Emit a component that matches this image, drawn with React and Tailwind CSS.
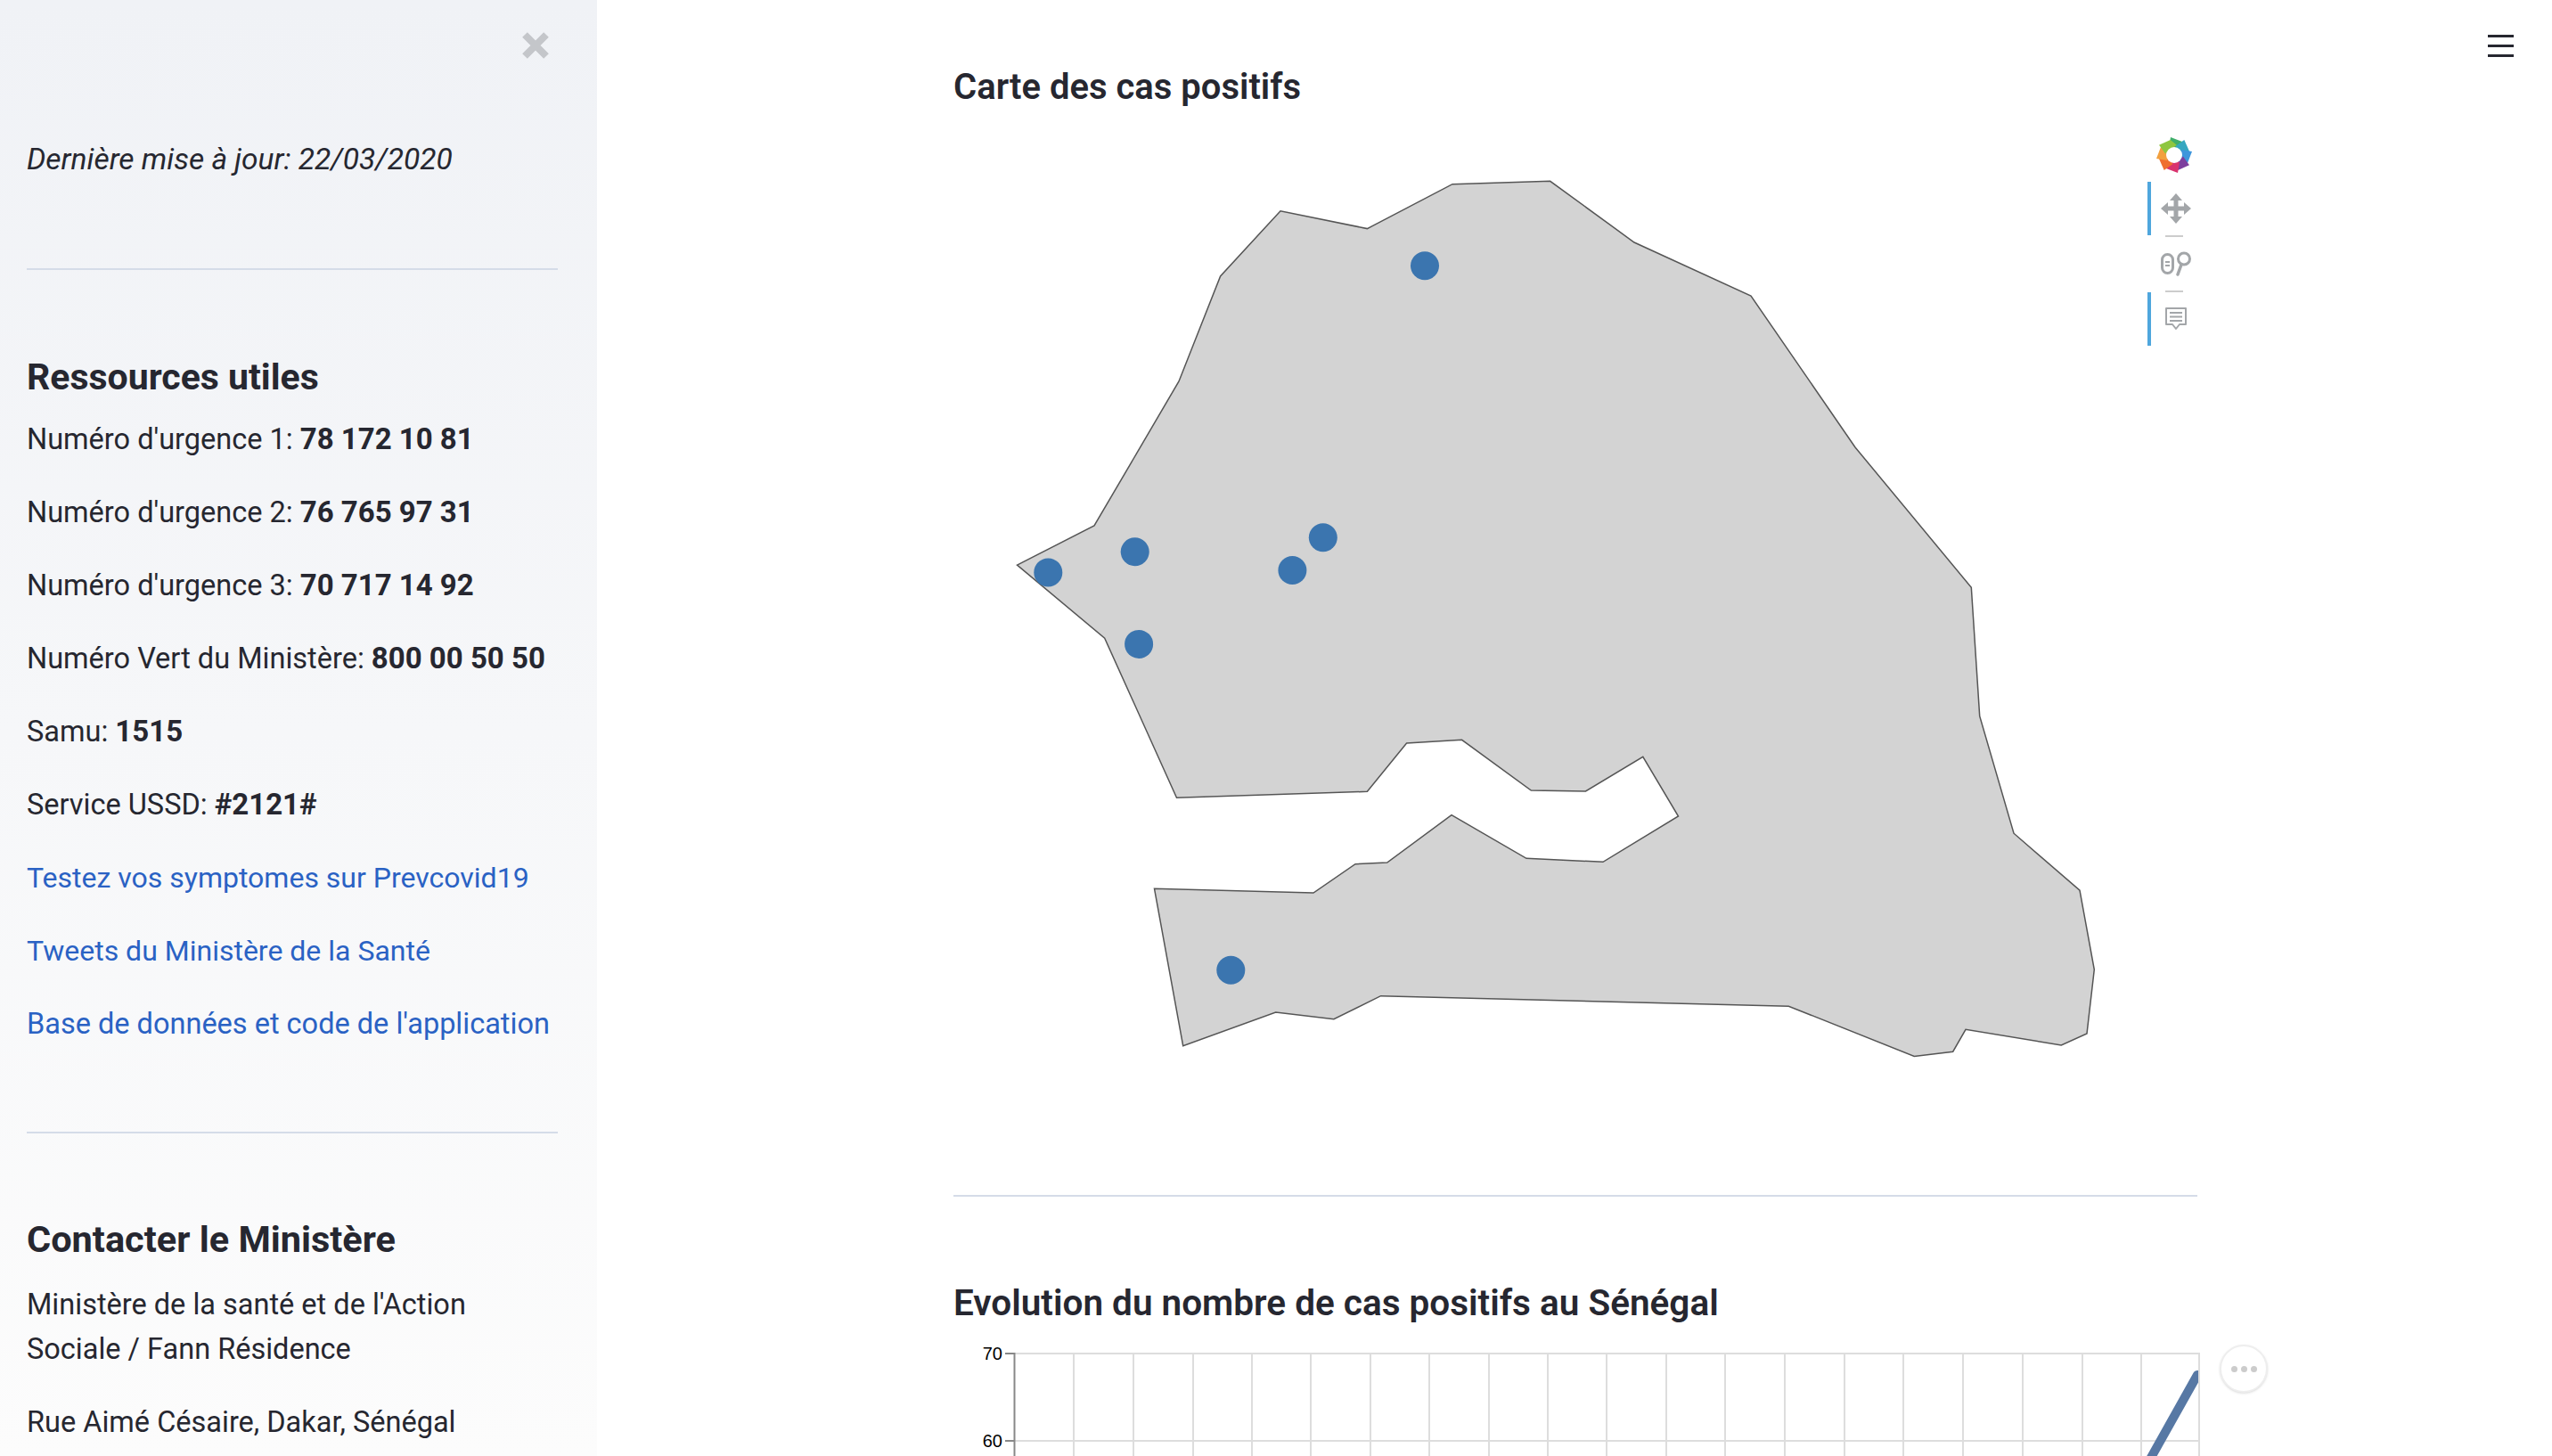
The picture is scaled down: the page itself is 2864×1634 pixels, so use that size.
import React from 'react';

const textFont = { fontFamily: 'Roboto, sans-serif' };

const mapOutline = [
  [1141.5, 634.2], [1228, 590], [1323, 428], [1369.6, 310], [1437, 236.7], [1534.4, 256.6],
  [1630, 206.7], [1739.7, 203.3], [1834, 272], [1965, 332], [2082, 502], [2212.3, 659.3],
  [2221.7, 803.6], [2260, 935.2], [2334, 999.2], [2350.3, 1088.1], [2342, 1160], [2313.3, 1173],
  [2206, 1155.3], [2191.7, 1180.2], [2148.3, 1185.4], [2007.3, 1129.2], [1549.6, 1117.7],
  [1496.9, 1143.7], [1431.7, 1136], [1327.7, 1173.7], [1295.5, 997.3], [1474, 1002],
  [1521, 969.7], [1556.7, 968], [1629, 914.7], [1713, 963.3], [1799, 967.3], [1883.5, 916],
  [1843.8, 849.3], [1779.5, 888], [1718.3, 887], [1640.6, 830.3], [1578.6, 834], [1534.4, 888.3],
  [1320.5, 895.3], [1239.7, 716.1],
];

const mapDots = [
  [1599, 298.3], [1273.7, 619.2], [1176.3, 642.4], [1484.8, 603.2],
  [1450.4, 640], [1278.1, 722.9], [1381.3, 1088.7],
];

const gridX = [1205, 1272, 1339, 1405, 1471, 1538, 1604, 1671, 1737, 1803, 1870, 1936, 2003, 2070, 2136, 2203, 2270, 2337, 2403, 2468];

const petals = ['#3fae6a', '#35a7c0', '#3f96dc', '#7d3f9e', '#d9336e', '#ef6f31', '#f2a03e', '#8fc640'];

const BokehLogo = () => (
  <svg width="42" height="42" viewBox="-21 -21 42 42">
    {petals.map((color, i) => (
      <path key={color} d="M-4 -20 L9 -15 L10 -6 L-6 -8 Z" fill={color} transform={`rotate(${i * 45})`} />
    ))}
    <circle r="9" fill="#fff" />
  </svg>
);

const PanIcon = () => (
  <svg width="34" height="34" viewBox="0 0 34 34" fill="#a3a6a9">
    <path d="M17 0l7 8h-4.5v6.5h6.5V10l8 7-8 7v-4.5h-6.5V26H24l-7 8-7-8h4.5v-6.5H8V24l-8-7 8-7v4.5h6.5V8H10z" />
  </svg>
);

const WheelZoomIcon = () => (
  <svg width="34" height="28" viewBox="0 0 34 28" fill="none" stroke="#a3a6a9" strokeWidth="3">
    <rect x="1.5" y="3.5" width="12" height="21" rx="6" />
    <path d="M5 12h5M5 16h5" strokeWidth="2" />
    <circle cx="26" cy="8.5" r="6.5" />
    <path d="M23 15l-4 11" strokeWidth="3.5" strokeLinecap="round" />
  </svg>
);

const HoverIcon = () => (
  <svg width="26" height="28" viewBox="0 0 26 28" fill="none" stroke="#a3a6a9" strokeWidth="2">
    <path d="M2 2h22v18h-7l-4 5-4-5H2z" strokeLinejoin="round" />
    <path d="M6 7h14M6 11.5h14M6 16h14" />
  </svg>
);

const Toolbar = () => (
  <div className="absolute left-[1740px] top-[153px] flex w-[60px] flex-col items-center">
    <div className="flex h-[51px] items-start"><BokehLogo /></div>
    <div className="flex h-[60px] w-full items-center justify-center border-l-4 border-[#4fa6dd]"><PanIcon /></div>
    <div className="h-[2px] w-[20px] bg-[#cccccc]" />
    <div className="flex h-[60px] w-full items-center justify-center border-l-4 border-transparent"><WheelZoomIcon /></div>
    <div className="h-[2px] w-[20px] bg-[#cccccc]" />
    <div className="flex h-[60px] w-full items-center justify-center border-l-4 border-[#4fa6dd]"><HoverIcon /></div>
  </div>
);

const Phone = ({ label, value }) => (
  <p className="mb-[32px]">
    {label} <strong className="text-[33px] font-bold">{value}</strong>
  </p>
);

const Sidebar = () => (
  <aside className="relative h-[1634px] w-[670px] shrink-0 overflow-hidden bg-gradient-to-b from-[#f0f2f6] to-[#fcfcfc] pl-[30px] pr-[44px] pt-[154px] text-[32.5px] leading-[50px] text-[#262730]" style={textFont}>
    <button className="absolute left-[586px] top-[36px]" aria-label="Fermer">
      <svg width="30" height="30" viewBox="0 0 30 30" stroke="#c4c6ca" strokeWidth="8">
        <path d="M3 3l24 24M27 3L3 27" />
      </svg>
    </button>
    <p className="text-[33.5px] italic">Dernière mise à jour: 22/03/2020</p>
    <hr className="mt-[97px] mb-[90px] border-t-2 border-[#d5dce8]" />
    <h2 className="mb-[15px] text-[41px] font-bold leading-[60px]">Ressources utiles</h2>
    <Phone label="Numéro d'urgence 1:" value="78 172 10 81" />
    <Phone label="Numéro d'urgence 2:" value="76 765 97 31" />
    <Phone label="Numéro d'urgence 3:" value="70 717 14 92" />
    <Phone label="Numéro Vert du Ministère:" value="800 00 50 50" />
    <Phone label="Samu:" value="1515" />
    <Phone label="Service USSD:" value="#2121#" />
    <p className="mb-[32px] text-[32px] text-[#2a62c4]">Testez vos symptomes sur Prevcovid19</p>
    <p className="mb-[32px] text-[32px] text-[#2a62c4]">Tweets du Ministère de la Santé</p>
    <p className="text-[#2a62c4]">Base de données et code de l'application</p>
    <hr className="mt-[96px] mb-[89px] border-t-2 border-[#d5dce8]" />
    <h2 className="mb-[18px] text-[41.5px] font-bold leading-[60px]">Contacter le Ministère</h2>
    <p className="mb-[32px]">Ministère de la santé et de l'Action Sociale / Fann Résidence</p>
    <p>Rue Aimé Césaire, Dakar, Sénégal</p>
  </aside>
);

const SenegalMap = () => (
  <svg width="1396" height="1100" viewBox="1070 170 1396 1100" className="block">
    <polygon
      points={mapOutline.map((p) => p.join(',')).join(' ')}
      fill="#d3d3d3"
      stroke="#555555"
      strokeWidth="1.5"
    />
    {mapDots.map(([cx, cy]) => (
      <circle key={cx} cx={cx} cy={cy} r="16" fill="#3b75af" />
    ))}
  </svg>
);

const LineChart = () => (
  <svg width="1420" height="150" viewBox="1050 1500 1420 150" className="block">
    <defs>
      <clipPath id="plot-area">
        <rect x="1138" y="1519" width="1329" height="140" />
      </clipPath>
    </defs>
    {gridX.map((x) => (
      <line key={x} x1={x} y1="1519" x2={x} y2="1650" stroke="#dddddd" strokeWidth="2" />
    ))}
    {[1519, 1617].map((y) => (
      <line key={y} x1="1138" y1={y} x2="2469" y2={y} stroke="#dddddd" strokeWidth="2" />
    ))}
    <line x1="1138.5" y1="1518" x2="1138.5" y2="1650" stroke="#888888" strokeWidth="2" />
    <line x1="1128" y1="1519" x2="1138" y2="1519" stroke="#888888" strokeWidth="2" />
    <line x1="1128" y1="1617" x2="1138" y2="1617" stroke="#888888" strokeWidth="2" />
    <text x="1125" y="1526" textAnchor="end" fontSize="20" fontFamily="Liberation Sans, sans-serif" fill="#000">70</text>
    <text x="1125" y="1624" textAnchor="end" fontSize="20" fontFamily="Liberation Sans, sans-serif" fill="#000">60</text>
    <path d="M2406 1650L2466 1543" stroke="#5778a4" strokeWidth="10" strokeLinecap="round" clipPath="url(#plot-area)" />
  </svg>
);

export default function App() {
  return (
    <div className="flex h-[1634px] overflow-hidden bg-white text-[#262730]">
      <Sidebar />
      <main className="relative h-[1634px] flex-1 overflow-hidden" style={textFont}>
        <button className="absolute left-[2122px] top-[39px] flex w-[29px] flex-col gap-[8px]" aria-label="Menu">
          <span className="h-[3px] bg-[#262730]" />
          <span className="h-[3px] bg-[#262730]" />
          <span className="h-[3px] bg-[#262730]" />
        </button>
        <Toolbar />
        <div className="absolute left-[1821px] top-[1509px] flex h-[54px] w-[54px] items-center justify-center gap-[4px] rounded-full border-2 border-[#eeeeee] bg-white shadow-sm">
          <span className="h-[7px] w-[7px] rounded-full bg-[#cccccc]" />
          <span className="h-[7px] w-[7px] rounded-full bg-[#cccccc]" />
          <span className="h-[7px] w-[7px] rounded-full bg-[#cccccc]" />
        </div>
        <div className="w-[1796px] pl-[400px] pt-[68px]">
          <h2 className="h-[60px] text-[40px] font-semibold leading-[60px]">Carte des cas positifs</h2>
          <div className="mt-[42px]"><SenegalMap /></div>
          <hr className="mt-[71px] border-t-2 border-[#d5dce8]" />
          <h2 className="mt-[89px] h-[60px] text-[40.5px] font-semibold leading-[60px]">Evolution du nombre de cas positifs au Sénégal</h2>
          <div className="-ml-[20px] mt-[8px]"><LineChart /></div>
        </div>
      </main>
    </div>
  );
}
